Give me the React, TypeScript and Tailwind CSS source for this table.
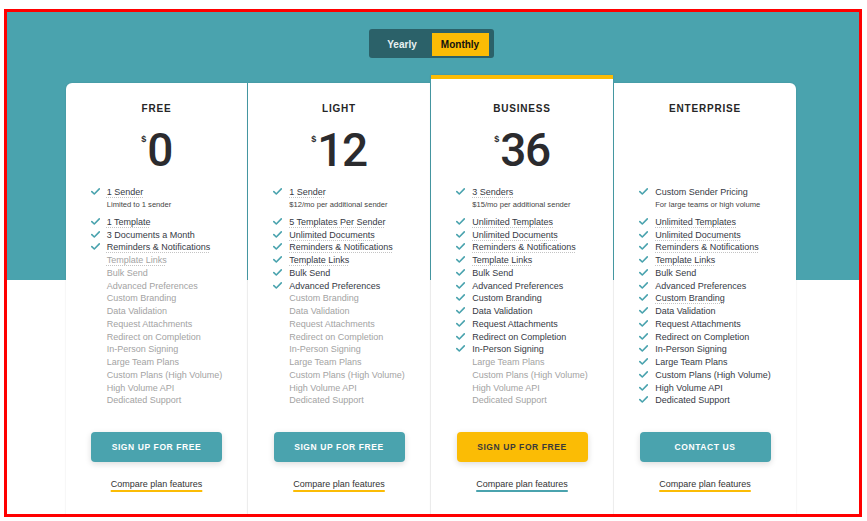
import React from "react";

type Item = { t: string; u?: boolean };

type Plan = {
  name: string;
  price?: string;
  head: Item;
  sub: string;
  first: Item[];
  active: number;
  btn: string;
  featured?: boolean;
  customBrandingU?: boolean;
  round?: string;
  w: string;
};

const rest = (cbU?: boolean): Item[] => [
  { t: "Template Links", u: true },
  { t: "Bulk Send" },
  { t: "Advanced Preferences" },
  { t: "Custom Branding", u: cbU },
  { t: "Data Validation" },
  { t: "Request Attachments" },
  { t: "Redirect on Completion" },
  { t: "In-Person Signing" },
  { t: "Large Team Plans" },
  { t: "Custom Plans (High Volume)" },
  { t: "High Volume API" },
  { t: "Dedicated Support" },
];

const plans: Plan[] = [
  {
    name: "FREE",
    price: "0",
    head: { t: "1 Sender", u: true },
    sub: "Limited to 1 sender",
    first: [{ t: "1 Template", u: true }, { t: "3 Documents a Month" }, { t: "Reminders & Notifications", u: true }],
    active: 3,
    btn: "SIGN UP FOR FREE",
    round: "rounded-tl-[6px]",
    w: "w-[181px]",
  },
  {
    name: "LIGHT",
    price: "12",
    head: { t: "1 Sender", u: true },
    sub: "$12/mo per additional sender",
    first: [{ t: "5 Templates Per Sender", u: true }, { t: "Unlimited Documents", u: true }, { t: "Reminders & Notifications", u: true }],
    active: 6,
    btn: "SIGN UP FOR FREE",
    w: "w-[182px]",
  },
  {
    name: "BUSINESS",
    price: "36",
    head: { t: "3 Senders", u: true },
    sub: "$15/mo per additional sender",
    first: [{ t: "Unlimited Templates", u: true }, { t: "Unlimited Documents", u: true }, { t: "Reminders & Notifications", u: true }],
    active: 11,
    btn: "SIGN UP FOR FREE",
    featured: true,
    w: "w-[182px]",
  },
  {
    name: "ENTERPRISE",
    head: { t: "Custom Sender Pricing" },
    sub: "For large teams or high volume",
    first: [{ t: "Unlimited Templates", u: true }, { t: "Unlimited Documents", u: true }, { t: "Reminders & Notifications", u: true }],
    active: 15,
    btn: "CONTACT US",
    customBrandingU: true,
    round: "rounded-tr-[6px]",
    w: "w-[182px]",
  },
];

function Check() {
  return (
    <svg width="9" height="7" viewBox="0 0 9 7" className="shrink-0 mt-[2px]">
      <path d="M0.8 3.6 L3.3 6 L8.3 0.9" fill="none" stroke="#4aa3ae" strokeWidth="1.6" strokeLinecap="round" strokeLinejoin="round" />
    </svg>
  );
}

function Label({ item, on }: { item: Item; on: boolean }) {
  return (
    <span
      className={`${on ? "text-[#363a45]" : "text-[#a3a3a3]"} ${
        item.u ? "underline decoration-dotted decoration-[#c4c4c4] underline-offset-[2px]" : ""
      } whitespace-nowrap`}
    >
      {item.t}
    </span>
  );
}

function Card({ p }: { p: Plan }) {
  const items = [...p.first, ...rest(p.customBrandingU)];
  return (
    <div
      className={`${p.w} bg-white flex flex-col items-center shadow-[0_0_2px_rgba(0,0,0,0.13)] ${
        p.featured ? "border-t-4 border-[#fbbc05] pt-[24px]" : "mt-[8px] pt-[20px]"
      } ${p.round ?? ""} pb-[40px]`}
    >
      <div className="text-[10px] leading-[12px] font-bold tracking-[0.8px] text-[#262626]">{p.name}</div>
      <div className="mt-[12px] h-[46px] flex items-start justify-center text-[#2b2b2e]">
        {p.price !== undefined && (
          <>
            <span className="text-[9px] leading-[9px] font-bold mt-[8px] mr-[1px]">$</span>
            <span className="text-[46px] leading-[46px] tracking-[-1.5px] font-medium font-['Roboto',Arial,sans-serif]">
              {p.price}
            </span>
          </>
        )}
      </div>
      <div className="mt-[13px] w-fit mx-auto text-[9px] leading-[12.75px]">
        <div className="flex gap-[7px] items-start">
          <Check />
          <div className="flex flex-col">
            <Label item={p.head} on={true} />
            <span className="text-[7.6px] leading-[11px] text-[#444]">{p.sub}</span>
          </div>
        </div>
        <div className="mt-[6px] flex flex-col">
          {items.map((it, i) => {
            const on = i < p.active;
            return (
              <div key={i} className="flex gap-[7px] items-start h-[12.75px]">
                {on ? <Check /> : <span className="w-[9px] shrink-0" />}
                <Label item={it} on={on} />
              </div>
            );
          })}
        </div>
      </div>
      <button
        className={`mt-[25px] w-[131px] h-[30px] rounded-[4px] text-[8.5px] font-bold tracking-[0.6px] shadow-[0_2px_6px_rgba(0,0,0,0.14)] ${
          p.featured ? "bg-[#fbbc05] text-[#3a3a3a]" : "bg-[#4aa3ae] text-white"
        }`}
      >
        {p.btn}
      </button>
      <div
        className={`mt-[16px] text-[9px] leading-[12px] text-[#333] underline decoration-2 underline-offset-[3px] ${
          p.featured ? "decoration-[#4aa3ae]" : "decoration-[#fbbc05]"
        }`}
      >
        Compare plan features
      </div>
    </div>
  );
}

export default function App() {
  return (
    <div className="w-[867px] h-[521px] bg-white pt-[9px] pl-[4px] font-['Liberation_Sans',Arial,sans-serif]">
      <div className="w-[858px] h-[508px] border-[3px] border-[#ff0000] overflow-hidden bg-[linear-gradient(to_bottom,#4aa3ae_0px,#4aa3ae_268px,#ffffff_268px)]">
        <div className="flex flex-col items-center pr-[4px] pt-[17px]">
          <div className="h-[29px] rounded-[3px] bg-[#2b6169] flex items-center pl-[4px] pr-[5px] pt-[1px]">
            <div className="w-[59px] text-center text-[10px] font-bold text-[#e8f1f2]">Yearly</div>
            <div className="w-[57px] h-[23px] bg-[#fbbc05] flex items-center justify-center text-[10px] font-bold text-[#111]">
              Monthly
            </div>
          </div>
          <div className="mt-[17px] flex items-start gap-px">
            {plans.map((p) => (
              <Card key={p.name} p={p} />
            ))}
          </div>
        </div>
      </div>
    </div>
  );
}
